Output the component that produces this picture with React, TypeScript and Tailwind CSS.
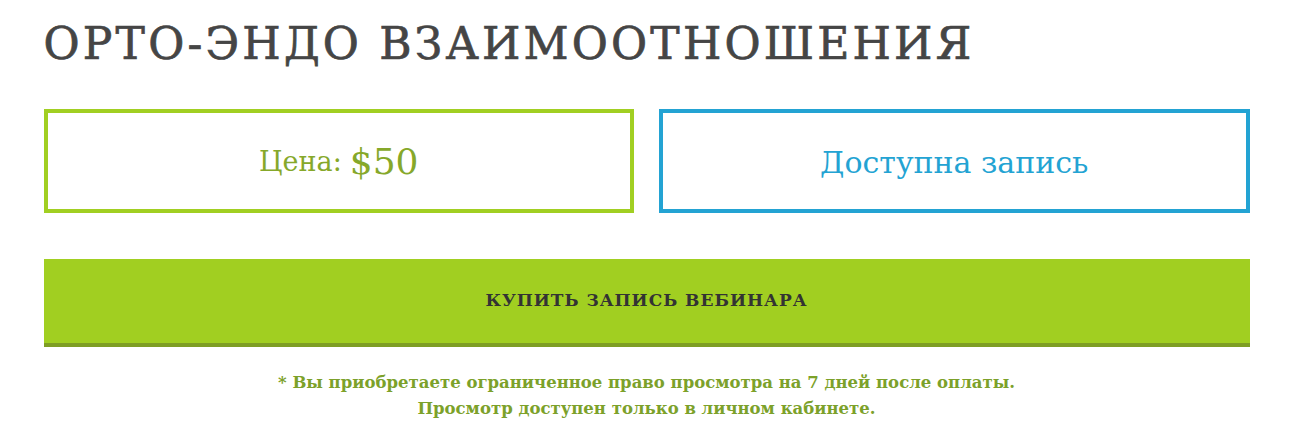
export default function App() {
  const serif = { fontFamily: '"DejaVu Serif", "Liberation Serif", serif' };
  return (
    <div className="bg-white w-full min-h-[444px]" style={serif}>
      <div className="mx-auto w-[1206px] pt-[16px]">
        <h1 className="text-[44px] leading-[56px] tracking-[3.2px] text-[#454545] font-normal [-webkit-text-stroke:0.7px_#454545]">
          ОРТО-ЭНДО ВЗАИМООТНОШЕНИЯ
        </h1>
        <div className="mt-[37px] grid grid-cols-2 gap-[25px]">
          <div className="h-[104px] border-4 border-[#a1cf22] flex items-center justify-center text-[#86a82a] pt-[2px]">
            <span className="text-[27px]">Цена:</span>
            <span className="text-[36px] ml-2">$50</span>
          </div>
          <div className="h-[104px] border-4 border-[#23a3d3] flex items-center justify-center text-[#23a3d3] pt-[2px]">
            <span className="text-[30px]">Доступна запись</span>
          </div>
        </div>
        <button className="mt-[46px] w-full h-[88px] bg-[#a1cf21] border-b-4 border-[#7e9e24] flex items-center justify-center text-[#333] text-[17px] font-bold tracking-[1px]">
          КУПИТЬ ЗАПИСЬ ВЕБИНАРА
        </button>
        <div className="mt-[23px] text-center text-[#7ca12a] text-[16.5px] font-bold leading-[26px]">
          <p>* Вы приобретаете ограниченное право просмотра на 7 дней после оплаты.</p>
          <p>Просмотр доступен только в личном кабинете.</p>
        </div>
      </div>
    </div>
  );
}
